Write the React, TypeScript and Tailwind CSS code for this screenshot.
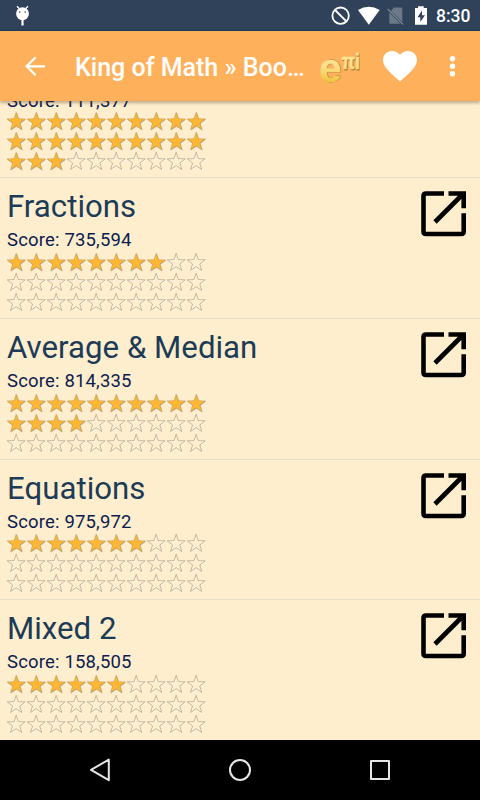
const STAR = 'M9 .3 L11.2 6.7 L18 6.9 L12.6 11 L14.6 17.5 L9 13.7 L3.4 17.5 L5.4 11 L0 6.9 L6.8 6.7 Z';

function Star({ filled }: { filled: boolean }) {
  return (
    <svg className="h-5 w-5 shrink-0 overflow-visible" viewBox="-.2 0 20 20">
      {filled ? (
        <>
          <path d={STAR} transform="translate(.4 .6)" fill="#a99c80" stroke="#c0b193" strokeWidth=".6" />
          <path d={STAR} fill="#ffb733" stroke="#b99a5c" strokeWidth=".5" />
        </>
      ) : (
        <>
          <path d={STAR} transform="translate(.6 .8)" fill="none" stroke="#fffaea" strokeWidth="1" />
          <path d={STAR} fill="none" stroke="#b0a284" strokeWidth=".75" />
        </>
      )}
    </svg>
  );
}

function Stars({ count }: { count: number }) {
  return (
    <div className="grid w-[200px] grid-cols-10">
      {Array.from({ length: 30 }, (_, i) => (
        <Star key={i} filled={i < count} />
      ))}
    </div>
  );
}

function OpenIcon() {
  return (
    <svg className="mt-[13px] mr-[13px] h-[46px] w-[46px] shrink-0" viewBox="0 0 46 46" fill="none" stroke="#000" strokeWidth="4.6">
      <path d="M23 2.5H5Q2.5 2.5 2.5 5V40.5Q2.5 43 5 43H40.2Q42.7 43 42.7 40.5V22.2" />
      <path d="M27.5 2.5H42.7V17.3M42 3L14 31" />
    </svg>
  );
}

interface Book {
  title: string;
  score: string;
  stars: number;
}

const books: Book[] = [
  { title: 'Geometry', score: '111,377', stars: 23 },
  { title: 'Fractions', score: '735,594', stars: 8 },
  { title: 'Average & Median', score: '814,335', stars: 14 },
  { title: 'Equations', score: '975,972', stars: 7 },
  { title: 'Mixed 2', score: '158,505', stars: 6 },
];

function Row({ book, first }: { book: Book; first: boolean }) {
  return (
    <div className="flex h-[140.67px] shrink-0 justify-between border-b border-[#e6dccb] pl-[7px]">
      <div>
        <div className="h-[50px] origin-left scale-x-[.976] pt-[8px] text-[32px] leading-[40px] whitespace-nowrap text-[#1c3b57]">
          {first ? '' : book.title}
        </div>
        <div className={`h-[24.5px] text-[18.5px] tracking-[.17px] whitespace-nowrap text-[#0c1c50] ${first ? 'leading-[26px]' : 'leading-[24px]'}`}>
          Score: {book.score}
        </div>
        <Stars count={book.stars} />
      </div>
      {!first && <OpenIcon />}
    </div>
  );
}

function StatusBar() {
  return (
    <div className="flex h-[31px] shrink-0 items-center border-b border-[#173c5c] bg-[#2f425a] text-white">
      <svg className="ml-[15px] h-[31px] w-4" viewBox="0 0 16 31">
        <path d="M2 6.2L4.2 8.5M13 6.2L10.8 8.5" stroke="#fff" strokeWidth="1.3" />
        <ellipse cx="7.5" cy="13.7" rx="6.4" ry="6.5" fill="#fff" />
        <path d="M7.5 20V25.5" stroke="#fff" strokeWidth="2.2" />
        <circle cx="4.7" cy="12" r=".8" fill="#2f425a" />
        <circle cx="10.2" cy="12" r=".8" fill="#2f425a" />
      </svg>
      <svg className="ml-auto h-[31px] w-[100px] shrink-0" viewBox="330 0 100 31">
        <circle cx="340.6" cy="15.7" r="8.2" fill="none" stroke="#fff" strokeWidth="1.8" />
        <path d="M335 10L346.5 21.5" stroke="#fff" strokeWidth="1.8" />
        <path d="M358 9.9Q368.8 3.5 379.7 9.9L368.8 24.7Z" fill="#fff" />
        <path d="M394 7.5H401Q402.3 7.5 402.3 9V22L391 11ZM389.3 12.5L400.5 23.8H390.5Q389.3 23.8 389.3 22.5Z" fill="#6b798b" />
        <path d="M387.7 9L403 24.4" stroke="#7b8797" strokeWidth="1.3" />
        <path d="M416 8H418V6.3H423.7V8H427V24.7H415V8Z" fill="#fff" />
        <path d="M422 10.5L417.5 17.2H420.3V22L425 15.2H422Z" fill="#2f425a" />
      </svg>
      <span className="mr-[10px] ml-[6px] w-[34px] pt-[3px] text-[17.5px] leading-none font-medium">8:30</span>
    </div>
  );
}

function Logo() {
  return (
    <svg className="h-10 w-11 shrink-0 overflow-visible" viewBox="318 46 44 40">
      <defs>
        <linearGradient id="gold" gradientUnits="userSpaceOnUse" x1="0" y1="54" x2="0" y2="82">
          <stop offset="0" stopColor="#ffe594" />
          <stop offset=".45" stopColor="#fadf88" />
          <stop offset="1" stopColor="#efc63e" />
        </linearGradient>
      </defs>
      <g className="font-['Liberation_Sans',sans-serif] font-bold" fill="#a57531" stroke="#a57531" strokeWidth=".8">
        <text x="319.8" y="82.2" fontSize="40" textLength="22.2" lengthAdjust="spacingAndGlyphs">e</text>
        <text x="342.4" y="69.6" fontSize="22" textLength="18" lengthAdjust="spacingAndGlyphs">πi</text>
      </g>
      <g className="font-['Liberation_Sans',sans-serif] font-bold" fill="url(#gold)" stroke="url(#gold)" strokeWidth=".6">
        <text x="319.2" y="81.5" fontSize="40" textLength="22.2" lengthAdjust="spacingAndGlyphs">e</text>
        <text x="341.8" y="68.9" fontSize="22" textLength="18" lengthAdjust="spacingAndGlyphs">πi</text>
      </g>
    </svg>
  );
}

function AppBar() {
  return (
    <div className="relative z-10 flex h-[70px] shrink-0 items-center bg-[#ffb05a] text-white shadow-[0_2px_3px_rgba(90,70,40,0.4)]">
      <svg className="ml-[25px] h-5 w-5 shrink-0" viewBox="0 0 20 20" fill="none" stroke="#fff" strokeWidth="2.2">
        <path d="M20 10.3H2M10.7 1.2L1.6 10.3L10.7 19.4" />
      </svg>
      <div className="ml-[30px] w-[243px] pt-[3px] text-[25px] leading-[30px] font-medium whitespace-nowrap">King of Math » Boo…</div>
      <Logo />
      <svg className="ml-[21px] h-[34px] w-[34px] shrink-0" viewBox="383 49 34 34">
        <path d="M400 81.5L397.6 79.3C388.5 71.2 383 66.2 383 60C383 54.9 387 51 392 51C395.1 51 398.1 52.5 400 54.8C401.9 52.5 404.9 51 408 51C413 51 417 54.9 417 60C417 66.2 411.5 71.2 402.4 79.3Z" fill="#fff" />
      </svg>
      <svg className="ml-8 h-6 w-2 shrink-0" viewBox="0 0 8 24" fill="#fff">
        <circle cx="3.5" cy="4.8" r="2.7" />
        <circle cx="3.5" cy="12.3" r="2.7" />
        <circle cx="3.5" cy="19.8" r="2.7" />
      </svg>
    </div>
  );
}

function NavBar() {
  return (
    <div className="z-10 flex h-[60px] shrink-0 items-center justify-between bg-black px-[88px]">
      <svg className="h-6 w-6" viewBox="0 0 24 24" fill="none" stroke="#e6e6e6" strokeWidth="2" strokeLinejoin="round">
        <path d="M20.8 1.6V22.2L3 11.9Z" />
      </svg>
      <svg className="h-6 w-6" viewBox="0 0 24 24" fill="none" stroke="#e6e6e6" strokeWidth="2">
        <circle cx="12" cy="12" r="10" />
      </svg>
      <svg className="h-6 w-6" viewBox="0 0 24 24" fill="none" stroke="#e6e6e6" strokeWidth="2" strokeLinejoin="round">
        <rect x="3" y="3" width="18" height="18" />
      </svg>
    </div>
  );
}

export default function App() {
  return (
    <div className="flex h-[800px] w-[480px] flex-col overflow-hidden bg-[#ffeecd] font-[Roboto,sans-serif]">
      <StatusBar />
      <AppBar />
      <div className="-mb-px flex min-h-0 flex-1 flex-col justify-end overflow-hidden">
        {books.map((book, i) => (
          <Row key={book.title} book={book} first={i === 0} />
        ))}
      </div>
      <NavBar />
    </div>
  );
}
